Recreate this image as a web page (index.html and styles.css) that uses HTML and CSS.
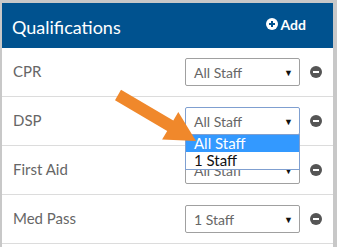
FILE: index.html
```html
<!DOCTYPE html>
<html lang="en">
<head>
  <meta charset="UTF-8">
  <title>Qualifications</title>
  <link rel="stylesheet" href="styles.css">
</head>
<body>
<div class="panel">
  <div class="panel-head">
    <h2 class="title">Qualifications</h2>
    <a class="add" href="#">
      <svg width="12" height="12" viewBox="0 0 12 12"><circle cx="6" cy="6" r="6" fill="#fff"/><path d="M6 3v6M3 6h6" stroke="#00528f" stroke-width="2"/></svg>
      Add
    </a>
  </div>
  <div class="row">
    <span class="label">CPR</span>
    <div class="picker">
      <div class="select">All Staff<span class="caret">&#9660;</span></div>
    </div>
    <span class="remove"></span>
  </div>
  <div class="row">
    <span class="label">DSP</span>
    <div class="picker">
      <div class="select focus">All Staff<span class="caret">&#9660;</span></div>
      <ul class="options">
        <li class="active">All Staff</li>
        <li>1 Staff</li>
      </ul>
    </div>
    <span class="remove"></span>
  </div>
  <div class="row">
    <span class="label">First Aid</span>
    <div class="picker">
      <div class="select">All Staff<span class="caret">&#9660;</span></div>
    </div>
    <span class="remove"></span>
  </div>
  <div class="row">
    <span class="label">Med Pass</span>
    <div class="picker">
      <div class="select">1 Staff<span class="caret">&#9660;</span></div>
    </div>
    <span class="remove"></span>
  </div>
  <svg class="pointer" width="331" height="244" viewBox="0 0 331 244">
    <path d="M119 86.8 L171.3 117.6 L176.3 109 L194 138 L160.1 136.6 L165.2 128 L113 97.2 Z" fill="#f0882b"/>
  </svg>
</div>
</body>
</html>
```
FILE: styles.css
```css
body {
  margin: 0;
  padding: 3px 4px 0 2px;
  background: #c8c8c8;
  font-family: Lato, "Open Sans", sans-serif;
  height: 247px;
  box-sizing: border-box;
  overflow: hidden;
}

.panel {
  position: relative;
  background: #fff;
  height: 244px;
}

.panel-head {
  display: flex;
  align-items: center;
  justify-content: space-between;
  height: 45px;
  padding: 0 27px 0 10px;
  background: #00528f;
  color: #fff;
}

.title {
  margin: 0;
  font-size: 18px;
  font-weight: normal;
  padding-top: 3px;
}

.add {
  display: flex;
  align-items: center;
  gap: 3px;
  color: #fff;
  font-size: 14px;
  font-weight: bold;
  text-decoration: none;
  margin-top: -3px;
}

.row {
  display: flex;
  align-items: center;
  height: 48px;
  padding: 0 11px 0 11px;
  border-bottom: 1px solid #dcdcdc;
}

.label {
  flex: 1;
  font-size: 15px;
  color: #666;
  margin-top: -3px;
}

.picker {
  position: relative;
  width: 115px;
}

.select {
  display: flex;
  align-items: center;
  justify-content: space-between;
  height: 26px;
  padding: 0 6px 0 8px;
  border: 1px solid #a0a0a0;
  border-radius: 2px;
  font-size: 14px;
  color: #666;
}

.select.focus {
  border-color: #7f9fd0;
}

.caret {
  font-size: 9px;
  color: #111;
}

.options {
  position: absolute;
  top: 100%;
  left: 0;
  right: 0;
  margin: -1px 0 0;
  padding: 0;
  list-style: none;
  background: #fff;
  border: 1px solid #7f9fd0;
  z-index: 2;
  font-size: 15px;
}

.options li {
  height: 17px;
  line-height: 17px;
  padding-left: 8px;
  color: #111;
}

.options .active {
  background: #3399ff;
  color: #fff;
}

.remove {
  position: relative;
  width: 12px;
  height: 12px;
  margin-left: 10px;
  border-radius: 50%;
  background: #555;
}

.remove::after {
  content: "";
  position: absolute;
  left: 3px;
  right: 3px;
  top: 5px;
  height: 2px;
  background: #fff;
}

.pointer {
  position: absolute;
  left: 0;
  top: 0;
  z-index: 3;
}
```
